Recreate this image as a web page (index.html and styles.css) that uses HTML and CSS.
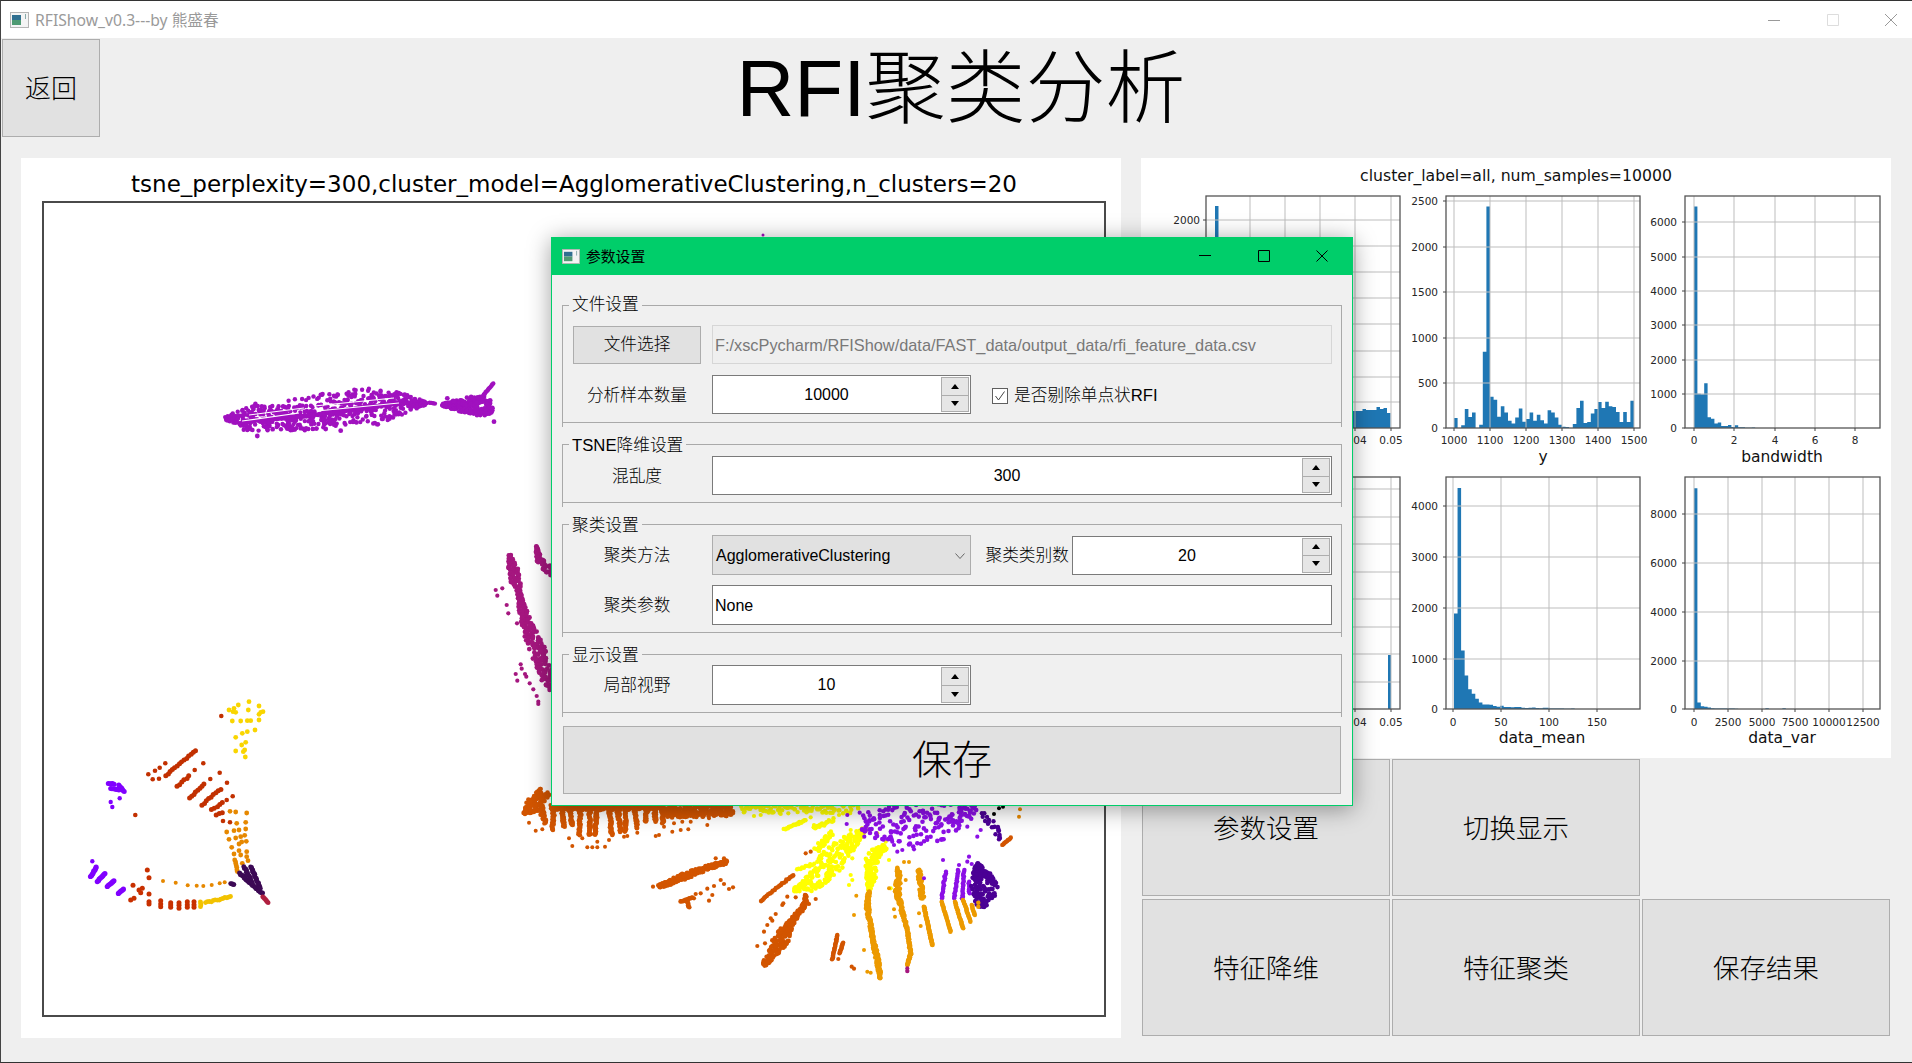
FILE: index.html
```html
<!DOCTYPE html>
<html lang="zh">
<head>
<meta charset="utf-8">
<title>RFIShow</title>
<link rel="stylesheet" href="styles.css">
</head>
<body>
<div class="window">
  <header class="titlebar">
    <svg class="app-icon" viewBox="0 0 19 16"><rect x=".5" y=".5" width="18" height="15" fill="#f4f4f4" stroke="#b5b5b5"/><rect x="2" y="3" width="9" height="5" fill="#2f6f90"/><rect x="2" y="8" width="9" height="5" fill="#4d9a72"/><rect x="15" y="2" width="1" height="5" fill="#8aa"/></svg>
    <span class="app-title">RFIShow_v0.3---by 熊盛春</span>
    <div class="win-controls">
      <svg class="win-min" viewBox="0 0 12 12"><path d="M0 6.5H12"/></svg>
      <svg class="win-max" viewBox="0 0 12 12"><path d="M.5 .5H11.5V11.5H.5Z"/></svg>
      <svg class="win-close" viewBox="0 0 12 12"><path d="M0 0L12 12M12 0L0 12"/></svg>
    </div>
  </header>

  <div class="head">
    <button class="btn btn-back">返回</button>
    <h1 class="page-title">RFI聚类分析</h1>
  </div>

  <main class="content">
    <section class="scatter-panel">
      <div class="scatter-title">tsne_perplexity=300,cluster_model=AgglomerativeClustering,n_clusters=20</div>
      <div class="scatter-plot"><svg id="scatter" viewBox="45 203 1060 812"></svg></div>
    </section>

    <div class="right-col">
      <section class="hist-panel">
        <svg class="hist-svg" viewBox="1141 158 750 600">
          <text class="fig-title" x="1516" y="181">cluster_label=all, num_samples=10000</text>

          <!-- column 1, top -->
          <path class="bar" d="M1215 428V206H1218.500V428Z"/>
          <path class="bar" transform="translate(1352 428) scale(3.5 -1)" d="M0 0V17h1V17h1V17h1V19h1V18h1V18h1V18h1V21h1V19h1V20h1V15h1V0Z"/>
          <path class="grid" d="M1250 196V428M1285 196V428M1320 196V428M1355 196V428M1391 196V428M1206 220H1400M1206 246H1400M1206 272H1400M1206 298H1400M1206 324H1400M1206 351H1400M1206 377H1400M1206 402H1400"/>
          <rect class="axes" x="1206" y="196" width="194" height="232"/>
          <path class="tick" d="M1203 220H1206M1355 428V431M1391 428V431"/>
          <text class="ty" x="1200" y="224">2000</text>
          <text class="tx" x="1355" y="444">0.04</text>
          <text class="tx" x="1391" y="444">0.05</text>

          <!-- column 2, top: y -->
          <path class="bar" transform="translate(1454 428) scale(3.6 -.0908)" d="M0 0V110h1V0h1V30h1V210h1V120h1V170h1V0h1V35h1V840h1V2440h1V345h1V310h1V125h1V240h1V170h1V80h1V50h1V115h1V215h1V70h1V100h1V170h1V80h1V145h1V85h1V50h1V195h1V170h1V115h1V35h1V15h1V10h1V0h1V45h1V220h1V300h1V55h1V65h1V160h1V210h1V285h1V220h1V290h1V240h1V230h1V175h1V65h1V175h1V65h1V300h1V0Z"/>
          <path class="grid" d="M1454 196V428M1490 196V428M1526 196V428M1562 196V428M1598 196V428M1634 196V428M1446 201H1640M1446 247H1640M1446 292H1640M1446 338H1640M1446 383H1640"/>
          <rect class="axes" x="1446" y="196" width="194" height="232"/>
          <path class="tick" d="M1443 201H1446M1443 247H1446M1443 292H1446M1443 338H1446M1443 383H1446M1443 428H1446M1454 428V431M1490 428V431M1526 428V431M1562 428V431M1598 428V431M1634 428V431"/>
          <text class="ty" x="1438" y="205">2500</text>
          <text class="ty" x="1438" y="251">2000</text>
          <text class="ty" x="1438" y="296">1500</text>
          <text class="ty" x="1438" y="342">1000</text>
          <text class="ty" x="1438" y="387">500</text>
          <text class="ty" x="1438" y="432">0</text>
          <text class="tx" x="1454" y="444">1000</text>
          <text class="tx" x="1490" y="444">1100</text>
          <text class="tx" x="1526" y="444">1200</text>
          <text class="tx" x="1562" y="444">1300</text>
          <text class="tx" x="1598" y="444">1400</text>
          <text class="tx" x="1634" y="444">1500</text>
          <text class="xl" x="1543" y="462">y</text>

          <!-- column 3, top: bandwidth -->
          <path class="bar" transform="translate(1694 428) scale(3.4 -.03434)" d="M0 0V6450h1V1000h1V980h1V1300h1V310h1V270h1V130h1V160h1V60h1V60h1V90h1V30h1V80h1V20h1V20h1V10h1V5h1V15h1V0Z"/>
          <path class="grid" d="M1694 196V428M1734 196V428M1775 196V428M1815 196V428M1855 196V428M1685 222H1880M1685 257H1880M1685 291H1880M1685 325H1880M1685 360H1880M1685 394H1880"/>
          <rect class="axes" x="1685" y="196" width="195" height="232"/>
          <path class="tick" d="M1682 222H1685M1682 257H1685M1682 291H1685M1682 325H1685M1682 360H1685M1682 394H1685M1682 428H1685M1694 428V431M1734 428V431M1775 428V431M1815 428V431M1855 428V431"/>
          <text class="ty" x="1677" y="226">6000</text>
          <text class="ty" x="1677" y="261">5000</text>
          <text class="ty" x="1677" y="295">4000</text>
          <text class="ty" x="1677" y="329">3000</text>
          <text class="ty" x="1677" y="364">2000</text>
          <text class="ty" x="1677" y="398">1000</text>
          <text class="ty" x="1677" y="432">0</text>
          <text class="tx" x="1694" y="444">0</text>
          <text class="tx" x="1734" y="444">2</text>
          <text class="tx" x="1775" y="444">4</text>
          <text class="tx" x="1815" y="444">6</text>
          <text class="tx" x="1855" y="444">8</text>
          <text class="xl" x="1782" y="462">bandwidth</text>

          <!-- column 1, bottom -->
          <path class="bar" d="M1388 709V655H1391V709Z"/>
          <path class="grid" d="M1355 477V709M1391 477V709M1206 489H1400M1206 517H1400M1206 544H1400M1206 572H1400M1206 599H1400M1206 627H1400M1206 654H1400M1206 682H1400"/>
          <rect class="axes" x="1206" y="477" width="194" height="232"/>
          <path class="tick" d="M1355 709V712M1391 709V712"/>
          <text class="tx" x="1355" y="726">0.04</text>
          <text class="tx" x="1391" y="726">0.05</text>

          <!-- column 2, bottom: data_mean -->
          <path class="bar" transform="translate(1454 709) scale(3.55 -.0508)" d="M0 0V1880h1V4350h1V1150h1V660h1V390h1V300h1V200h1V130h1V90h1V90h1V85h1V60h1V45h1V65h1V40h1V40h1V35h1V40h1V40h1V25h1V20h1V25h1V30h1V20h1V15h1V25h1V25h1V10h1V10h1V10h1V10h1V5h1V5h1V10h1V0Z"/>
          <path class="grid" d="M1453 477V709M1501 477V709M1549 477V709M1597 477V709M1446 506H1640M1446 557H1640M1446 608H1640M1446 659H1640"/>
          <rect class="axes" x="1446" y="477" width="194" height="232"/>
          <path class="tick" d="M1443 506H1446M1443 557H1446M1443 608H1446M1443 659H1446M1443 709H1446M1453 709V712M1501 709V712M1549 709V712M1597 709V712"/>
          <text class="ty" x="1438" y="510">4000</text>
          <text class="ty" x="1438" y="561">3000</text>
          <text class="ty" x="1438" y="612">2000</text>
          <text class="ty" x="1438" y="663">1000</text>
          <text class="ty" x="1438" y="713">0</text>
          <text class="tx" x="1453" y="726">0</text>
          <text class="tx" x="1501" y="726">50</text>
          <text class="tx" x="1549" y="726">100</text>
          <text class="tx" x="1597" y="726">150</text>
          <text class="xl" x="1542" y="743">data_mean</text>

          <!-- column 3, bottom: data_var -->
          <path class="bar" transform="translate(1694 709) scale(3.4 -.0244)" d="M0 0V9050h1V270h1V110h1V90h1V60h1V30h1V20h1V25h1V20h1V25h1V20h1V20h1V15h1V5h1V5h1V5h1V5h1V5h1V5h1V5h1V5h1V30h1V5h1V5h1V5h1V5h1V30h1V0Z"/>
          <path class="grid" d="M1694 477V709M1728 477V709M1762 477V709M1795 477V709M1829 477V709M1863 477V709M1685 514H1880M1685 563H1880M1685 612H1880M1685 661H1880"/>
          <rect class="axes" x="1685" y="477" width="195" height="232"/>
          <path class="tick" d="M1682 514H1685M1682 563H1685M1682 612H1685M1682 661H1685M1682 709H1685M1694 709V712M1728 709V712M1762 709V712M1795 709V712M1829 709V712M1863 709V712"/>
          <text class="ty" x="1677" y="518">8000</text>
          <text class="ty" x="1677" y="567">6000</text>
          <text class="ty" x="1677" y="616">4000</text>
          <text class="ty" x="1677" y="665">2000</text>
          <text class="ty" x="1677" y="713">0</text>
          <text class="tx" x="1694" y="726">0</text>
          <text class="tx" x="1728" y="726">2500</text>
          <text class="tx" x="1762" y="726">5000</text>
          <text class="tx" x="1795" y="726">7500</text>
          <text class="tx" x="1829" y="726">10000</text>
          <text class="tx" x="1863" y="726">12500</text>
          <text class="xl" x="1782" y="743">data_var</text>
        </svg>
      </section>

      <div class="action-grid">
        <button class="btn btn-action">参数设置</button>
        <button class="btn btn-action">切换显示</button>
        <div class="action-empty"></div>
        <button class="btn btn-action">特征降维</button>
        <button class="btn btn-action">特征聚类</button>
        <button class="btn btn-action">保存结果</button>
      </div>
    </div>
  </main>

  <div class="dialog">
    <div class="dialog-bar">
      <svg class="app-icon dialog-icon" viewBox="0 0 19 16"><rect x=".5" y=".5" width="18" height="15" fill="#f4f4f4" stroke="#b5b5b5"/><rect x="2" y="3" width="9" height="5" fill="#2f6f90"/><rect x="2" y="8" width="9" height="5" fill="#4d9a72"/><rect x="15" y="2" width="1" height="5" fill="#8aa"/></svg>
      <span class="dialog-title">参数设置</span>
      <div class="dialog-controls">
        <svg viewBox="0 0 12 12"><path d="M0 5.500H12"/></svg>
        <svg viewBox="0 0 12 12"><path d="M.5 .5H11.500V11.500H.5Z"/></svg>
        <svg viewBox="0 0 12 12"><path d="M.5 .5L11.500 11.500M11.500 .5L.5 11.500"/></svg>
      </div>
    </div>
    <div class="dialog-body">
      <div class="group group-file">
        <span class="legend legend-file">文件设置</span>
        <button class="btn btn-file">文件选择</button>
        <div class="field field-disabled">F:/xscPycharm/RFIShow/data/FAST_data/output_data/rfi_feature_data.csv</div>
        <label class="lbl">分析样本数量</label>
        <div class="inline">
          <div class="spin spin-short"><span class="spin-val">10000</span><span class="spin-btns"><i class="up"></i><i class="down"></i></span></div>
          <span class="check"><svg class="check-box" viewBox="0 0 16 16"><rect x=".5" y=".5" width="15" height="15"/><path d="M3.500 8L6.500 12L12.500 3.500"/></svg>是否剔除单点状RFI</span>
        </div>
      </div>

      <div class="group group-tsne">
        <span class="legend legend-tsne">TSNE降维设置</span>
        <label class="lbl">混乱度</label>
        <div class="spin"><span class="spin-val">300</span><span class="spin-btns"><i class="up"></i><i class="down"></i></span></div>
      </div>

      <div class="group">
        <span class="legend">聚类设置</span>
        <label class="lbl">聚类方法</label>
        <div class="inline inline-tight">
          <div class="combo"><span>AgglomerativeClustering</span><svg class="combo-arrow" viewBox="0 0 10 6"><path d="M.5 .5L5 5.500L9.500 .5"/></svg></div>
          <label class="lbl lbl-kinds">聚类类别数</label>
          <div class="spin spin-grow"><span class="spin-val">20</span><span class="spin-btns"><i class="up"></i><i class="down"></i></span></div>
        </div>
        <label class="lbl">聚类参数</label>
        <div class="field">None</div>
      </div>

      <div class="group group-view">
        <span class="legend">显示设置</span>
        <label class="lbl">局部视野</label>
        <div class="inline">
          <div class="spin spin-short spin-view"><span class="spin-val">10</span><span class="spin-btns"><i class="up"></i><i class="down"></i></span></div>
        </div>
      </div>

      <button class="btn btn-save">保存</button>
    </div>
  </div>
</div>
<script src="scatter.js"></script>
</body>
</html>
```

FILE: styles.css
```css
* { box-sizing: border-box; }
html, body { margin: 0; padding: 0; }
body {
  width: 1912px;
  height: 1063px;
  overflow: hidden;
  background: #efefef;
  font-family: "Liberation Sans", "Noto Sans CJK SC", sans-serif;
  color: #000;
}
.window {
  position: relative;
  height: 1063px;
  border-left: 1px solid #444;
  border-top: 1px solid #333;
  border-bottom: 1px solid #333;
  display: flex;
  flex-direction: column;
}

/* window title */
.titlebar {
  height: 37px;
  background: #fff;
  display: flex;
  align-items: center;
  padding-left: 9px;
  flex: none;
}
.app-icon { width: 19px; height: 16px; flex: none; }
.app-title {
  margin-left: 6px;
  font-size: 15.700px;
  color: #9a9a9a;
  font-family: "Noto Sans", "Noto Sans CJK SC", sans-serif;
}
.win-controls {
  margin-left: auto;
  display: flex;
  gap: 46.500px;
  padding-right: 15px;
}
.win-controls svg { width: 12px; height: 12px; fill: none; }
.win-min path, .win-close path { stroke: #999; }
.win-max path { stroke: #ddd; }

/* head row */
.head {
  height: 120px;
  flex: none;
  display: flex;
  align-items: flex-start;
  padding: 1px 0 0 1px;
}
.btn {
  font-family: "Noto Sans CJK SC", "Liberation Sans", sans-serif;
  background: #e1e1e1;
  border: 1px solid #adadad;
  color: #000;
  padding: 0 0 3px;
  margin: 0;
  font-weight: 300;
}
.btn-back { width: 98px; height: 98px; font-size: 26px; flex: none; }
.page-title {
  flex: 1;
  margin: 0;
  padding: 0 90px 0 0;
  height: 98px;
  line-height: 99px;
  text-align: center;
  font-size: 80px;
  font-weight: 300;
}

/* main columns */
.content {
  flex: none;
  display: flex;
  align-items: flex-start;
  gap: 20px;
  padding-left: 20px;
}
.scatter-panel {
  width: 1100px;
  height: 880px;
  background: #fff;
  flex: none;
  padding: 0 15px 0 21px;
}
.scatter-title {
  height: 43px;
  line-height: 52px;
  text-align: center;
  font-family: "DejaVu Sans", sans-serif;
  font-size: 23px;
  white-space: nowrap;
}
.scatter-plot {
  width: 1064px;
  height: 816px;
  border: 2px solid #4a4a4a;
  overflow: hidden;
}
.scatter-plot svg { display: block; width: 100%; height: 100%; }

.right-col { width: 750px; flex: none; }
.hist-panel { height: 600px; background: #fff; }
.hist-svg { display: block; width: 750px; height: 600px; font-family: "DejaVu Sans", sans-serif; }
.fig-title { font-size: 15.700px; text-anchor: middle; fill: #111; }
.bar { fill: #1f77b4; }
.grid { fill: none; stroke: #bdbdbd; stroke-width: 1; }
.axes { fill: none; stroke: #555; stroke-width: 1.300; }
.tick { fill: none; stroke: #444; stroke-width: 1; }
.ty { font-size: 10.500px; text-anchor: end; fill: #262626; }
.tx { font-size: 10.500px; text-anchor: middle; fill: #262626; }
.xl { font-size: 15.500px; text-anchor: middle; fill: #111; }

.action-grid {
  margin-top: 1px;
  margin-left: 1px;
  display: grid;
  grid-template-columns: 248px 248px 248px;
  grid-template-rows: 137px 137px;
  column-gap: 2px;
  row-gap: 3px;
}
.btn-action { font-size: 26.500px; }

/* dialog overlay */
.dialog {
  position: absolute;
  left: 550px;
  top: 236px;
  width: 802px;
  height: 569px;
  background: #f0f0f0;
  border: 1px solid #00ce6a;
  border-top: 0;
  box-shadow: 0 3px 22px rgba(0, 0, 0, .38);
}
.dialog-bar {
  height: 38px;
  margin: 0 -1px;
  background: #00ce6a;
  display: flex;
  align-items: center;
  padding-left: 11px;
}
.dialog-icon { width: 18px; height: 15px; }
.dialog-title { margin: -2px 0 0 6px; font-size: 14.800px; font-family: "Noto Sans CJK SC", sans-serif; }
.dialog-controls {
  margin-left: auto;
  display: flex;
  gap: 46.500px;
  padding-right: 25px;
}
.dialog-controls svg { width: 12px; height: 12px; fill: none; stroke: #000; }
.dialog-body { padding: 30px 10px 0; }

.group {
  position: relative;
  border: 1px solid #a9a9a9;
  display: grid;
  grid-template-columns: 128px 1fr;
  gap: 10px 11px;
  align-items: center;
  padding: 10px 9px 7px 10px;
  margin-bottom: 21px;
}
.group::before, .group::after {
  content: "";
  position: absolute;
  bottom: -5px;
  width: 1px;
  height: 4px;
  background: #a9a9a9;
}
.group::before { left: -1px; }
.group::after { right: -1px; }
.group-file { padding-top: 19px; padding-bottom: 8px; row-gap: 11px; }
.group-tsne { padding-top: 11px; }
.group-view { margin-bottom: 13px; }
.legend {
  position: absolute;
  top: -12px;
  left: 6px;
  padding: 0 3px;
  background: #f0f0f0;
  font-size: 16.700px;
  line-height: 22px;
  font-family: "Noto Sans CJK SC", sans-serif;
  font-weight: 300;
  white-space: nowrap;
}
.legend-file { top: -14px; }
.legend-tsne { top: -10.500px; font-family: "Liberation Sans", "Noto Sans CJK SC", sans-serif; }
.lbl {
  font-size: 16.700px;
  text-align: center;
  white-space: nowrap;
  padding-bottom: 2px;
  font-family: "Noto Sans CJK SC", sans-serif;
  font-weight: 300;
}
.btn-file { height: 38px; font-size: 16.700px; }
.field {
  height: 40px;
  line-height: 40px;
  border: 1px solid #7a7a7a;
  background: #fff;
  font-size: 16px;
  padding-left: 2px;
  white-space: nowrap;
}
.field-disabled {
  height: 39px;
  line-height: 39px;
  background: #efefef;
  border: 1px solid #d6d6d6;
  color: #787878;
  font-size: 16.330px;
}
.inline { display: flex; align-items: center; gap: 21px; }
.inline-tight { gap: 0; }
.spin {
  height: 39px;
  border: 1px solid #7a7a7a;
  background: #fff;
  display: flex;
  align-items: stretch;
  font-size: 16px;
  padding: 1px;
}
.spin-short { width: 259px; flex: none; }
.spin-view { height: 40px; }
.spin-grow { flex: 1; }
.spin-val { flex: 1; text-align: center; line-height: 36px; padding-right: 2px; }
.spin-btns {
  width: 28px;
  display: grid;
  grid-template-rows: 1fr 1fr;
  border: 1px solid #adadad;
  background: #e6e6e6;
}
.spin-btns i {
  display: flex;
  align-items: center;
  justify-content: center;
}
.spin-btns i + i { border-top: 1px solid #adadad; }
.up::before, .down::before {
  content: "";
  border-left: 4px solid transparent;
  border-right: 4px solid transparent;
}
.up::before { border-bottom: 5px solid #000; }
.down::before { border-top: 5px solid #000; }
.check {
  display: flex;
  align-items: center;
  gap: 6px;
  font-size: 16.700px;
  font-weight: 300;
  white-space: nowrap;
  line-height: 20px;
  padding-top: 2px;
}
.check-box { width: 16px; height: 16px; fill: #fff; }
.check-box rect { stroke: #5f5f5f; }
.check-box path { fill: none; stroke: #444; }
.combo {
  width: 259px;
  height: 40px;
  flex: none;
  background: #e1e1e1;
  border: 1px solid #adadad;
  display: flex;
  align-items: center;
  justify-content: space-between;
  font-size: 16px;
  padding: 2px 5px 0 3px;
}
.combo-arrow { width: 10px; height: 6px; fill: none; stroke: #666; }
.lbl-kinds { margin: 0 3px 0 14.500px; }
.btn-save {
  display: block;
  width: 778px;
  height: 68px;
  margin-left: 1px;
  padding-bottom: 7px;
  font-size: 40px;
}
```

FILE: scatter.js
```js
(function () {
  var seed = 12345;
  function rnd() {
    seed = (seed * 1664525 + 1013904223) % 4294967296;
    return seed / 4294967296;
  }
  var out = [];
  function dot(c, r, x, y) {
    out.push('<circle cx="' + x.toFixed(1) + '" cy="' + y.toFixed(1) + '" r="' + r + '" fill="' + c + '"/>');
  }
  // frame: [originX, originY, scale] of the coordinates that follow
  var Z6 = [60, 680, 3], Z7 = [520, 790, 3], Z8 = [200, 360, 3];
  function dots(f, c, r, pts) {
    pts.forEach(function (p) { dot(c, r, f[0] + p[0] / f[2], f[1] + p[1] / f[2]); });
  }
  // stroke: dots laid along a polyline; third value of a point = half width
  function stroke(f, c, r, step, pts) {
    for (var i = 0; i < pts.length - 1; i++) {
      var a = pts[i], b = pts[i + 1];
      var dx = b[0] - a[0], dy = b[1] - a[1], len = Math.sqrt(dx * dx + dy * dy) || 1;
      var n = Math.max(1, Math.round(len / step));
      for (var k = 0; k <= n; k++) {
        var t = k / n;
        var w = (a[2] || 0) + ((b[2] || 0) - (a[2] || 0)) * t;
        var o = (rnd() * 2 - 1) * w;
        var s = (rnd() * 2 - 1) * w * 0.3;
        dot(c, r,
          f[0] + (a[0] + dx * t - dy / len * o + dx / len * s) / f[2],
          f[1] + (a[1] + dy * t + dx / len * o + dy / len * s) / f[2]);
      }
    }
  }

  var PURP = '#a011bf', MAG = '#a5177f', YEL = '#f9d500', RED = '#c23000', ORG = '#e68800',
      DARK = '#3d0a55', VIO = '#8000ff', FAN = '#d25500', LEM = '#ffff00', AMB = '#ec9a00',
      VI2 = '#8c10e6', IND = '#4b0095', GOLD = '#f2c200';

  dot(PURP, 1.5, 764, 235);

  // fish
  stroke(Z8, PURP, 2.2, 1.1, [[80, 175, 4], [150, 172, 40], [300, 165, 48], [400, 148, 52], [520, 140, 56], [620, 130, 30], [682, 130, 4]]);
  stroke(Z8, PURP, 2.2, 3, [[130, 185, 3], [340, 165, 3], [600, 130, 3]]);
  stroke(Z8, PURP, 2.2, 5, [[692, 129, 1], [708, 130, 1]]);
  stroke(Z8, PURP, 2.3, 0.7, [[730, 135, 3], [800, 135, 24], [850, 140, 32], [875, 160, 12]]);
  stroke(Z8, PURP, 2.2, 4, [[850, 110, 1], [882, 70, 1]]);
  dots(Z8, PURP, 2.4, [[885, 185], [745, 115], [765, 125], [380, 207], [425, 212], [405, 188], [175, 228], [880, 145]]);

  // magenta
  stroke(Z8, MAG, 2.4, 1.5, [[932, 585, 3], [945, 640, 20], [960, 700, 5], [975, 770, 14], [1010, 860, 24], [1050, 960, 20], [1060, 985, 10]]);
  stroke(Z8, MAG, 2.4, 2, [[1011, 560, 3], [1020, 600, 8], [1060, 640, 14]]);
  dots(Z8, MAG, 2.1, [[890, 690], [910, 685], [895, 707], [923, 735], [928, 760], [954, 790], [965, 913], [968, 926], [950, 942], [955, 962], [978, 942], [982, 950], [992, 970], [1003, 988], [1013, 1008], [1018, 1025], [1018, 1032]]);

  // lower-left groups
  dots(Z6, YEL, 2.4, [[510, 90], [525, 85], [538, 75], [600, 78], [570, 65], [568, 90], [530, 97], [605, 97], [600, 103], [520, 123], [545, 123], [565, 122], [600, 120], [575, 122], [550, 160], [565, 155], [588, 150], [530, 172], [560, 187], [548, 195], [530, 213], [557, 210], [553, 215], [559, 231], [522, 95], [612, 95]]);
  dots(Z6, RED, 2.3, [[487, 108], [229, 405], [268, 283], [288, 272], [302, 263], [319, 250], [281, 298], [300, 296], [407, 270], [433, 250], [454, 297], [482, 278], [504, 308], [503, 360], [521, 349], [492, 423], [513, 427]]);
  stroke(Z6, RED, 2.5, 9, [[320, 287, 2], [410, 212, 2]]);
  stroke(Z6, RED, 2.5, 9, [[355, 320, 2], [390, 288, 2]]);
  stroke(Z6, RED, 2.5, 9, [[392, 355, 2], [435, 312, 2]]);
  stroke(Z6, RED, 2.5, 9, [[428, 375, 2], [485, 327, 2]]);
  stroke(Z6, RED, 2.5, 9, [[458, 390, 2], [490, 368, 2]]);
  stroke(Z6, RED, 2.5, 9, [[472, 405, 1], [490, 398, 1]]);
  dots(Z6, ORG, 2.4, [[513, 394], [530, 396], [563, 399], [533, 430], [560, 427], [503, 456], [525, 452], [540, 450], [560, 447], [510, 478], [530, 474], [545, 470], [557, 466], [518, 502], [540, 492], [548, 486], [562, 484], [525, 522], [540, 512], [563, 515], [545, 525], [563, 530], [550, 550], [567, 542]]);
  stroke(Z6, ORG, 2.4, 6, [[528, 540, 1], [535, 575, 1]]);
  stroke(Z6, DARK, 2.4, 3, [[540, 580, 2], [610, 640, 2]]);
  stroke(Z6, DARK, 2.4, 3, [[555, 560, 2], [580, 610, 2]]);
  stroke(Z6, DARK, 2.4, 3, [[575, 560, 2], [605, 625, 2]]);
  stroke(Z6, DARK, 2.3, 3, [[515, 610, 1], [525, 614, 1]]);
  stroke(Z6, '#b02040', 2.4, 4, [[612, 650, 1], [627, 668, 1]]);
  stroke(Z6, VIO, 2.5, 4, [[148, 310, 1], [165, 312, 1]]);
  stroke(Z6, VIO, 2.5, 4, [[180, 315, 1], [195, 335, 1]]);
  stroke(Z6, VIO, 2.5, 4, [[155, 325, 1], [180, 330, 1]]);
  dots(Z6, VIO, 2.2, [[182, 355], [155, 366], [160, 381], [100, 544]]);
  stroke(Z6, VIO, 2.6, 5, [[95, 590, 1], [112, 562, 1]]);
  stroke(Z6, VIO, 2.6, 5, [[115, 605, 1], [137, 580, 1]]);
  stroke(Z6, VIO, 2.6, 5, [[145, 620, 1], [165, 603, 1]]);
  stroke(Z6, VIO, 2.6, 5, [[178, 640, 1], [193, 627, 1]]);
  dots(Z6, '#c83000', 2.5, [[222, 616], [240, 630], [250, 625], [245, 638], [215, 660], [225, 655], [265, 570], [270, 593], [270, 642], [270, 665], [270, 672], [305, 662], [305, 672], [305, 680], [335, 668], [335, 682], [335, 675], [360, 668], [360, 676], [360, 685], [385, 665], [385, 674], [385, 682], [405, 665], [405, 674], [405, 682]]);
  dots(Z6, ORG, 2, [[312, 603], [350, 608], [386, 616], [413, 617], [433, 618], [458, 615], [482, 610], [497, 607]]);
  stroke(Z6, GOLD, 2.4, 6, [[425, 665, 1], [425, 680, 1]]);
  stroke(Z6, GOLD, 2.4, 6, [[440, 668, 2], [515, 650, 2]]);

  // orange fan beneath the dialog
  stroke(Z7, FAN, 2.2, 1.5, [[95, 52, 8], [440, 52, 8]]);
  [[105, 50, 100, 120], [128, 50, 135, 110], [150, 60, 160, 105], [185, 50, 180, 135], [212, 50, 212, 135], [235, 50, 228, 135], [270, 50, 278, 135], [295, 50, 305, 125], [320, 50, 320, 125], [345, 50, 355, 115], [385, 50, 380, 95], [405, 50, 410, 95], [430, 50, 432, 100]].forEach(function (l) {
    stroke(Z7, FAN, 2.3, 2.4, [[l[0], l[1], 4], [l[2], l[3], 3]]);
  });
  stroke(Z7, FAN, 2.3, 1, [[15, 70, 4], [45, 45, 25], [75, 5, 18]]);
  stroke(Z7, FAN, 2.2, 2, [[60, 40, 10], [80, 100, 4]]);
  stroke(Z7, FAN, 2.3, 1, [[440, 65, 18], [640, 62, 16]]);
  dots(Z7, FAN, 2, [[50, 122], [70, 118], [30, 98], [150, 145], [160, 168], [190, 145], [205, 172], [220, 172], [235, 155], [235, 172], [258, 170], [270, 150], [315, 140], [325, 138], [355, 128], [410, 138], [420, 135], [435, 110], [460, 125], [465, 100], [485, 120], [490, 95], [508, 118], [515, 95], [565, 105], [570, 85]]);

  // yellow
  stroke(Z7, LEM, 2.2, 3, [[665, 55, 12], [1020, 55, 16]]);
  dots(Z7, LEM, 2.1, [[705, 78], [725, 75], [785, 72], [808, 70], [855, 62], [885, 105], [875, 82], [960, 75], [995, 120], [995, 255], [990, 285], [1000, 270], [1110, 210], [1115, 295], [1075, 130], [1100, 155], [860, 262], [880, 250], [900, 235], [930, 250], [945, 255], [975, 215], [1000, 205]]);
  stroke(Z7, LEM, 2.2, 4, [[795, 118, 2], [860, 90, 3]]);
  stroke(Z7, LEM, 2.2, 4, [[885, 115, 4], [945, 90, 6]]);
  stroke(Z7, LEM, 2.2, 2.2, [[890, 180, 10], [940, 130, 8]]);
  stroke(Z7, LEM, 2.3, 1.3, [[825, 300, 5], [880, 280, 26], [940, 210, 38], [990, 160, 26], [1040, 115, 5]]);
  stroke(Z7, LEM, 2.3, 1.3, [[1100, 170, 8], [1060, 200, 20], [1055, 260, 16], [1050, 300, 3]]);
  stroke(Z7, LEM, 2.2, 5, [[835, 238, 3], [885, 222, 3]]);

  // purple cloud
  stroke(Z7, VI2, 2.3, 2, [[1030, 100, 26], [1120, 105, 60], [1220, 110, 65], [1330, 70, 32], [1370, 55, 10]]);
  dots(Z7, VI2, 2.1, [[985, 75], [983, 102], [1022, 68], [1036, 140], [1120, 155], [1125, 165], [1135, 185], [1150, 180], [1185, 178], [1225, 150], [1345, 110], [1375, 140], [1385, 120]]);
  stroke(Z7, IND, 2.2, 5, [[1390, 70, 8], [1430, 110, 15], [1440, 150, 10]]);
  dots(Z7, '#000', 2, [[1440, 55], [1425, 72], [1452, 50]]);
  stroke(Z7, FAN, 2.2, 4, [[1450, 165, 1], [1476, 143, 1]]);
  dots(Z7, ORG, 2, [[1503, 58], [1500, 80]]);

  // right fan
  dots(Z7, VI2, 2.1, [[1272, 210], [1320, 225], [1350, 200], [1345, 215], [1358, 222]]);
  stroke(Z7, VI2, 2.2, 5, [[1280, 245, 2], [1268, 325, 2]]);
  stroke(Z7, VI2, 2.2, 5, [[1318, 240, 2], [1305, 325, 2]]);
  stroke(Z7, VI2, 2.2, 5, [[1335, 240, 2], [1330, 325, 2]]);
  stroke(Z7, VI2, 2.2, 5, [[1350, 275, 2], [1350, 310, 2]]);
  stroke(Z7, IND, 2.3, 0.9, [[1375, 222, 6], [1385, 260, 28], [1397, 295, 44], [1385, 350, 12]]);
  stroke(Z7, AMB, 2.2, 3, [[1268, 335, 1], [1295, 425, 1]]);
  stroke(Z7, AMB, 2.2, 3, [[1308, 335, 1], [1332, 415, 1]]);
  stroke(Z7, AMB, 2.2, 3, [[1332, 330, 1], [1355, 395, 1]]);
  stroke(Z7, AMB, 2.2, 3, [[1358, 345, 1], [1367, 375, 1]]);
  dots(Z7, AMB, 2.2, [[1378, 338], [1378, 350]]);

  // amber ribs
  stroke(Z7, AMB, 2.4, 1.6, [[1050, 305, 3], [1045, 350, 5], [1060, 440, 3], [1075, 510, 6], [1085, 565, 3]]);
  stroke(Z7, AMB, 2.3, 2, [[1140, 235, 6], [1135, 310, 8], [1165, 420, 2], [1175, 490, 2], [1165, 525, 1]]);
  stroke(Z7, AMB, 2.3, 2, [[1200, 240, 5], [1210, 325, 6]]);
  stroke(Z7, AMB, 2.3, 2, [[1215, 350, 1], [1240, 465, 1]]);
  dots(Z7, AMB, 2, [[1012, 317], [1005, 375], [1125, 358], [1128, 380], [1110, 295], [1155, 216], [1170, 216], [1160, 270], [1200, 370], [1205, 408], [1035, 480], [1045, 545], [1055, 548]]);
  dot('#a5177f', 2.2, 520 + 1165 / 3, 790 + 543 / 3);
  dot('#a5177f', 2, 520 + 1165 / 3, 790 + 535 / 3);
  dots(Z7, VI2, 2, [[1215, 265]]);

  // orange lobes
  stroke(Z7, FAN, 2.3, 1.3, [[420, 290, 5], [480, 265, 10], [560, 235, 7], [625, 215, 5]]);
  dots(Z7, FAN, 2.1, [[402, 290], [425, 285], [545, 310], [530, 312], [565, 296], [585, 288], [605, 270], [615, 282], [630, 297], [642, 292], [580, 315], [570, 332], [525, 325], [590, 205], [615, 205]]);
  stroke(Z7, FAN, 2.3, 3, [[485, 335, 1], [520, 322, 1]]);
  stroke(Z7, FAN, 2.3, 3, [[505, 335, 1], [510, 352, 1]]);
  stroke(Z7, FAN, 2.3, 6, [[725, 332, 2], [822, 255, 2]]);
  stroke(Z7, FAN, 2.3, 1.1, [[860, 315, 2], [860, 340, 6], [815, 400, 9], [785, 450, 24], [735, 525, 6]]);
  dots(Z7, FAN, 2.1, [[860, 190], [875, 185], [805, 320], [830, 322], [793, 340], [790, 345], [770, 372], [755, 385], [745, 405], [735, 425], [715, 468], [738, 460], [760, 392], [890, 327], [870, 342]]);
  stroke(Z7, FAN, 2.2, 3, [[940, 508, 1], [955, 435, 1]]);
  stroke(Z7, FAN, 2.2, 3, [[962, 490, 1], [972, 458, 1]]);
  dots(Z7, FAN, 2.1, [[958, 507], [998, 530], [1005, 536]]);

  var streak = '<path d="M243 421L300 413M318 411L400 403" fill="none" stroke="#fff" stroke-width="1.2"/><path d="M250 415L305 408M315 406L395 398" fill="none" stroke="#fff" stroke-width="1"/>';
  document.getElementById('scatter').innerHTML = out.join('') + streak;
})();
```
